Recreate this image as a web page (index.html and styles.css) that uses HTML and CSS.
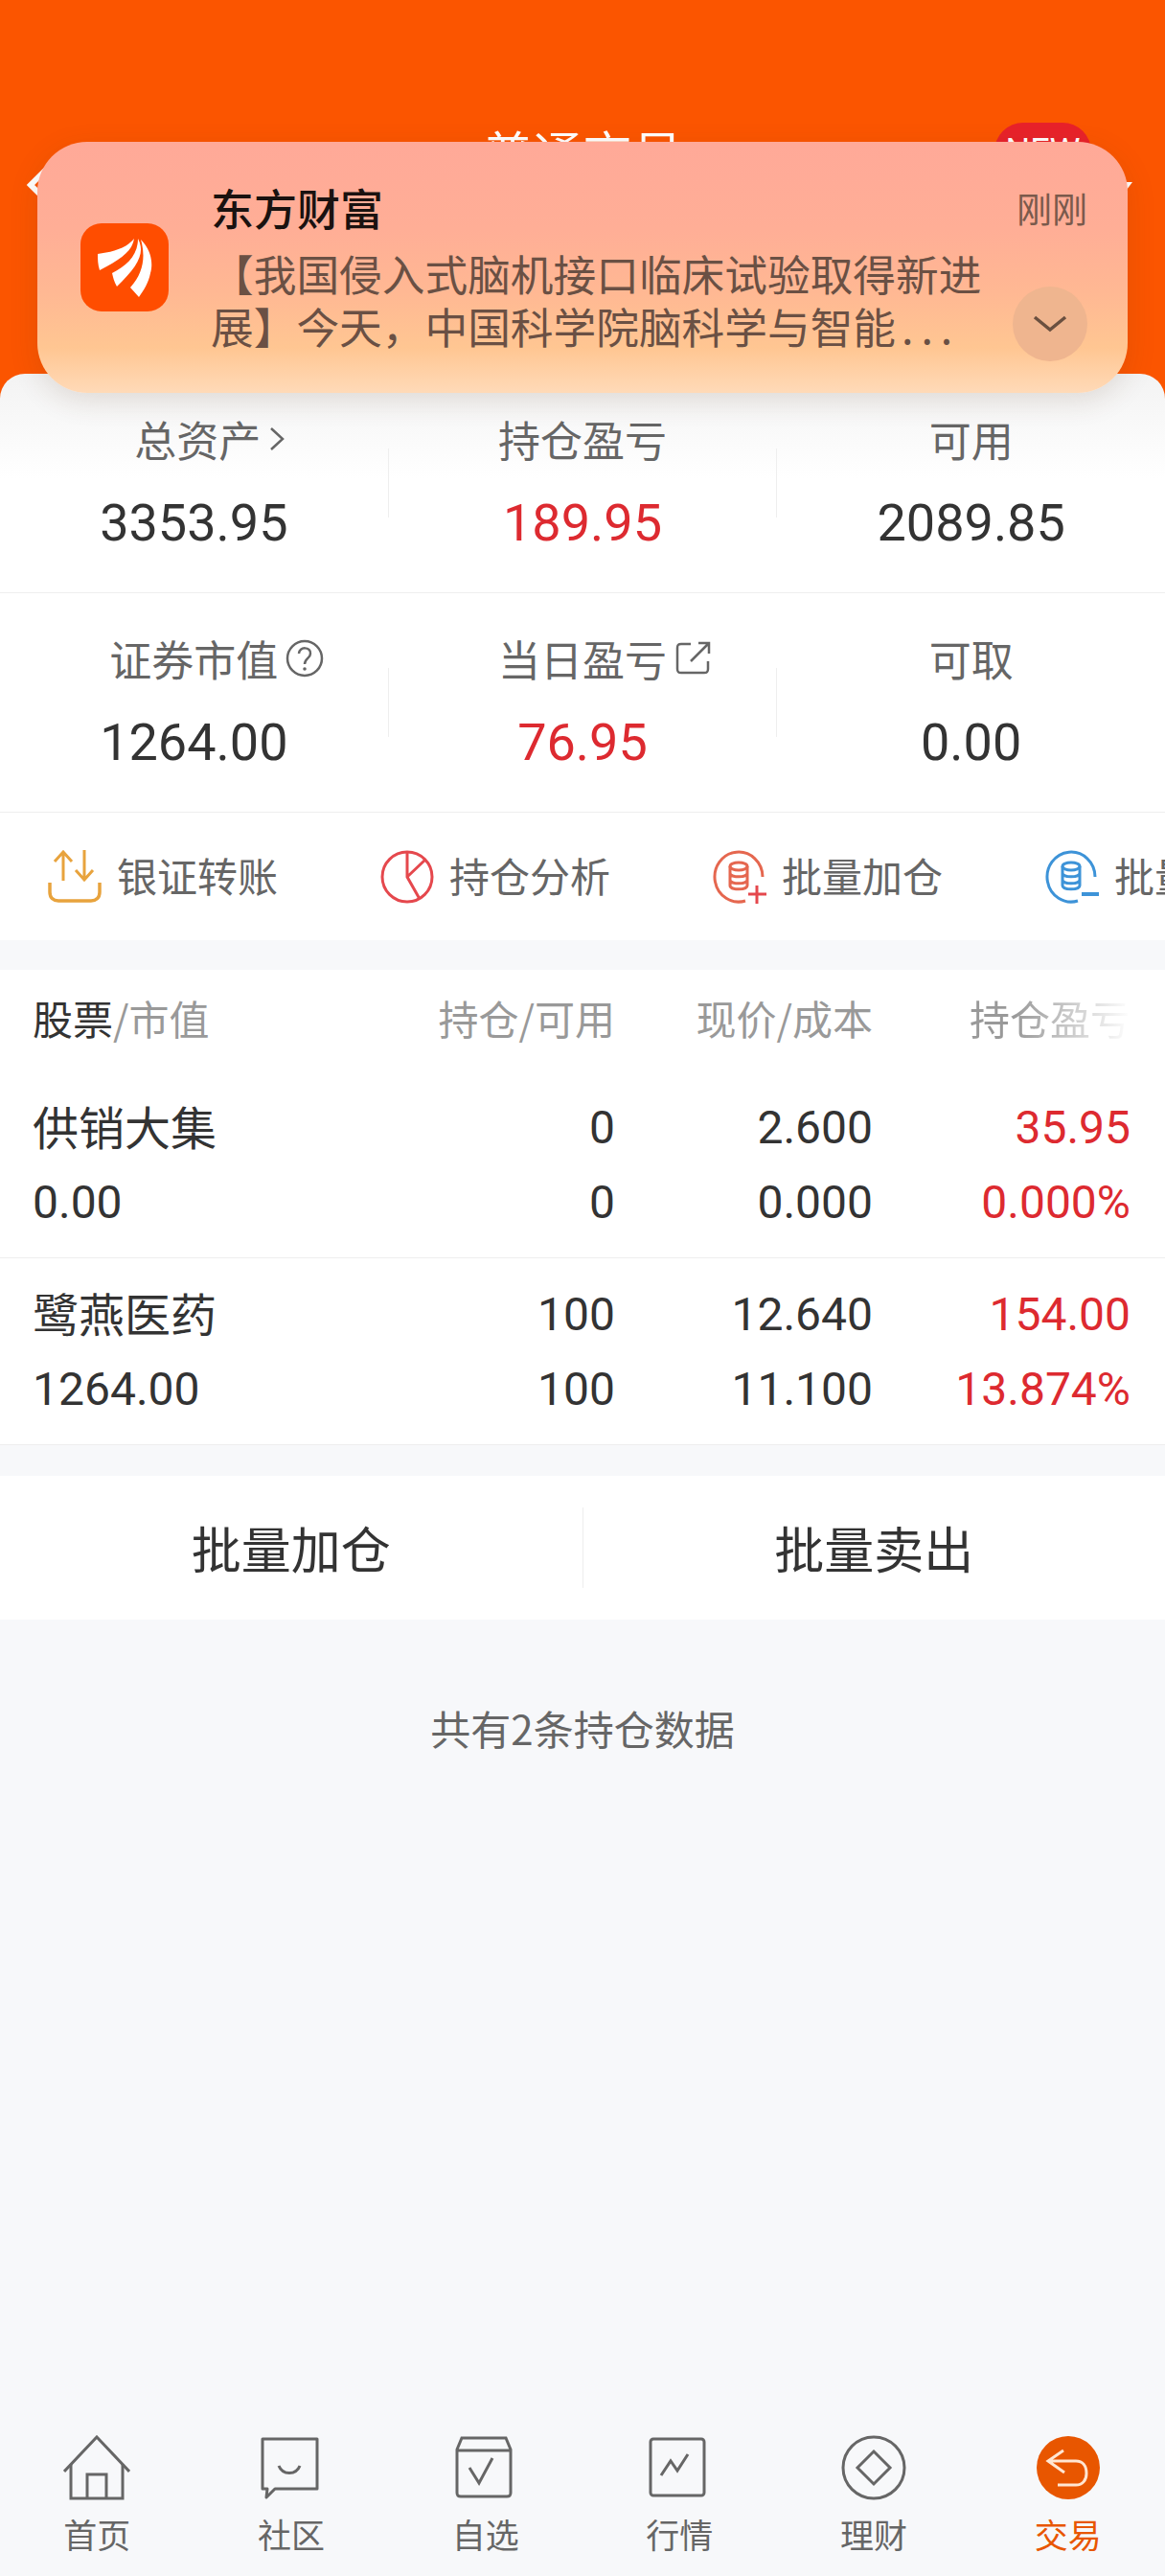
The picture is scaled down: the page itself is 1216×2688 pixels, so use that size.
FILE: index.html
```html
<!DOCTYPE html>
<html lang="zh-CN">
<head>
    <meta charset="UTF-8">
    <title>普通交易</title>
    <link rel="stylesheet" href="styles.css">
</head>
<body>
<div class="page">
    <div class="top">
        <svg class="back" width="30" height="40" viewBox="0 0 30 40"><path d="M24 4 L8 20 L24 36" fill="none" stroke="#fff" stroke-width="6"/></svg>
        <span class="top-title">普通交易</span>
        <span class="new">NEW</span>
        <span class="drop"></span>
    </div>

    <div class="notice">
        <svg class="logo" width="92" height="92" viewBox="0 0 92 92">
            <rect width="92" height="92" rx="22" fill="#ff4d00"/>
            <path d="M18 32C32 30 47 27 56 16C54 29 43 37 20 49C18 43 18 37 18 32Z" fill="#fff"/>
            <path d="M33 52C48 44 60 34 60 16C68 31 60 45 38 66C35 61 34 56 33 52Z" fill="#fff"/>
            <path d="M63 17C74 28 76 42 73 52C71 62 66 70 61 77L52 67C66 52 68 34 63 17Z" fill="#fff"/>
        </svg>
        <div class="notice-main">
            <div class="notice-title">东方财富</div>
            <div class="notice-text">【我国侵入式脑机接口临床试验取得新进展】今天，中国科学院脑科学与智能<span class="dots">...</span></div>
        </div>
        <div class="notice-side">
            <span class="notice-time">刚刚</span>
            <span class="notice-more">
                <svg width="36" height="20" viewBox="0 0 36 20"><path d="M2 3 L18 16 L34 3" fill="none" stroke="#6a5040" stroke-width="3.5"/></svg>
            </span>
        </div>
    </div>

    <div class="assets">
        <div class="stats">
            <div class="stat">
                <div class="stat-label">总资产<svg class="gt" width="18" height="28" viewBox="0 0 18 28"><path d="M3 3 L15 14 L3 25" fill="none" stroke="#666" stroke-width="2.5"/></svg></div>
                <div class="stat-num">3353.95</div>
            </div>
            <i class="stat-sep"></i>
            <div class="stat">
                <div class="stat-label">持仓盈亏</div>
                <div class="stat-num red">189.95</div>
            </div>
            <i class="stat-sep"></i>
            <div class="stat">
                <div class="stat-label">可用</div>
                <div class="stat-num">2089.85</div>
            </div>
        </div>
        <div class="stats">
            <div class="stat">
                <div class="stat-label">证券市值<svg class="ask" width="40" height="40" viewBox="0 0 40 40"><circle cx="20" cy="20" r="18" fill="none" stroke="#666" stroke-width="2.5"/><path d="M14 15C14 7 27 8 26 15C26 20 20 20 20 26" fill="none" stroke="#666" stroke-width="2.5"/><circle cx="20" cy="31" r="1.8" fill="#666"/></svg></div>
                <div class="stat-num">1264.00</div>
            </div>
            <i class="stat-sep"></i>
            <div class="stat">
                <div class="stat-label">当日盈亏<svg class="ask" width="40" height="38" viewBox="0 0 38 38"><path d="M16 4H6C3 4 2 5 2 8V30C2 33 3 34 6 34H30C33 34 34 33 34 30V22" fill="none" stroke="#666" stroke-width="2.5"/><path d="M16 22L34 4M24 3H35V14" fill="none" stroke="#666" stroke-width="2.5"/></svg></div>
                <div class="stat-num red">76.95</div>
            </div>
            <i class="stat-sep"></i>
            <div class="stat">
                <div class="stat-label">可取</div>
                <div class="stat-num">0.00</div>
            </div>
        </div>
    </div>

    <div class="tools">
        <div class="tool">
            <svg width="56" height="56" viewBox="0 0 56 56" fill="none" stroke="#e8a33d" stroke-width="3"><path d="M16 32V2M7 12L16 2L25 12M38 0V30M29 21L38 31L47 21"/><path d="M2 34V44C2 50 6 53 11 53H45C50 53 54 50 54 44V34" stroke-width="3.5"/></svg>
            <span>银证转账</span>
        </div>
        <div class="tool">
            <svg width="56" height="56" viewBox="0 0 56 56" fill="none" stroke="#e5484d" stroke-width="3"><circle cx="28" cy="28" r="26"/><path d="M28 2V28L41 51M28 28L47 10"/></svg>
            <span>持仓分析</span>
        </div>
        <div class="tool">
            <svg width="56" height="56" viewBox="0 0 56 56" fill="none" stroke="#e5674f" stroke-width="3"><path d="M52 28A25 26 0 1 0 34 53"/><ellipse cx="27" cy="17" rx="9" ry="4"/><path d="M18 17V37C18 42 36 42 36 37V17M18 24C18 29 36 29 36 24M18 31C18 36 36 36 36 31"/><path d="M46 37V56M37 46H56" stroke="#e5484d"/></svg>
            <span>批量加仓</span>
        </div>
        <div class="tool">
            <svg width="56" height="56" viewBox="0 0 56 56" fill="none" stroke="#3d93d8" stroke-width="3"><path d="M52 28A25 26 0 1 0 34 53"/><ellipse cx="27" cy="17" rx="9" ry="4"/><path d="M18 17V37C18 42 36 42 36 37V17M18 24C18 29 36 29 36 24M18 31C18 36 36 36 36 31"/><path d="M38 46H56" stroke-width="4"/></svg>
            <span>批量减仓</span>
        </div>
    </div>

    <div class="table">
        <div class="row head">
            <div><b>股票</b>/市值</div>
            <div class="cell">持仓/可用</div>
            <div class="cell">现价/成本</div>
            <div class="cell head-fade">持仓盈亏</div>
        </div>
        <div class="row">
            <div><div class="name">供销大集</div><div class="num">0.00</div></div>
            <div class="cell"><div class="num">0</div><div class="num">0</div></div>
            <div class="cell"><div class="num">2.600</div><div class="num">0.000</div></div>
            <div class="cell red"><div class="num">35.95</div><div class="num">0.000%</div></div>
        </div>
        <div class="row">
            <div><div class="name">鹭燕医药</div><div class="num">1264.00</div></div>
            <div class="cell"><div class="num">100</div><div class="num">100</div></div>
            <div class="cell"><div class="num">12.640</div><div class="num">11.100</div></div>
            <div class="cell red"><div class="num">154.00</div><div class="num">13.874%</div></div>
        </div>
    </div>

    <div class="batch">
        <div class="batch-btn">批量加仓</div>
        <i class="batch-sep"></i>
        <div class="batch-btn">批量卖出</div>
    </div>

    <div class="total">共有2条持仓数据</div>

    <div class="tabs">
        <div class="tab">
            <svg width="70" height="68" viewBox="0 0 70 68" fill="none" stroke="#666" stroke-width="3"><path d="M1 38L35 2L69 38"/><path d="M8 30V66H62V30M25 66V41H45V66"/></svg>
            <span>首页</span>
        </div>
        <div class="tab">
            <svg width="70" height="68" viewBox="0 0 70 68" fill="none" stroke="#666" stroke-width="3"><path d="M5 4H62V56H18L9 65L10 56H5Z" stroke-linejoin="round"/><path d="M22 32C26 42 40 42 44 32"/></svg>
            <span>社区</span>
        </div>
        <div class="tab">
            <svg width="70" height="68" viewBox="0 0 70 68" fill="none" stroke="#666" stroke-width="3"><path d="M5 15L10 3H56L61 15V60C61 63 60 64 57 64H9C6 64 5 63 5 60ZM5 16H61"/><path d="M18 34L28 50L42 24"/></svg>
            <span>自选</span>
        </div>
        <div class="tab">
            <svg width="70" height="68" viewBox="0 0 70 68" fill="none" stroke="#666" stroke-width="3"><rect x="5" y="4" width="56" height="59" rx="3"/><path d="M16 42L26 27L33 37L44 20"/></svg>
            <span>行情</span>
        </div>
        <div class="tab">
            <svg width="70" height="68" viewBox="0 0 70 68" fill="none" stroke="#666" stroke-width="3"><circle cx="35" cy="34" r="32"/><path d="M35 17L52 34L35 51L18 34Z"/></svg>
            <span>理财</span>
        </div>
        <div class="tab active">
            <svg width="70" height="68" viewBox="0 0 70 68" fill="none"><circle cx="35" cy="34" r="33" fill="#e85600"/><path d="M30 16L14 27L31 39M14 27H43C50 27 54 32 54 40C54 47 50 52 43 52H24" stroke="#ffe6d2" stroke-width="3"/></svg>
            <span>交易</span>
        </div>
    </div>
</div>
</body>
</html>
```

FILE: styles.css
```css
*{box-sizing:border-box;}
html,body{margin:0;padding:0;}
body{font-family:"Noto Sans CJK SC","Noto Sans",sans-serif;color:#333;background:#f7f8fa;}
.page{position:relative;width:1216px;min-height:2688px;display:flex;flex-direction:column;overflow:hidden;}
.num{font-family:Roboto,"Noto Sans CJK SC",sans-serif;}
.red{color:#dd2a30;}

.top{
    height:420px;
    background:#fb5500;
    display:flex;
    align-items:flex-start;
    justify-content:center;
    padding-top:124px;
    position:relative;
    color:#fff;
}
.top-title{font-size:52px;line-height:70px;}
.back{position:absolute;left:24px;top:173px;}
.new{
    position:absolute;
    left:1038px;
    top:128px;
    width:101px;
    height:60px;
    border-radius:30px;
    background:#e8222a;
    font:36px/60px Roboto,sans-serif;
    text-align:center;
}
.drop{
    position:absolute;
    left:1158px;
    top:190px;
    border-left:12px solid transparent;
    border-right:12px solid transparent;
    border-top:16px solid #fff;
}

.notice{
    position:absolute;
    left:39px;
    top:148px;
    width:1138px;
    height:262px;
    z-index:5;
    border-radius:52px;
    background:linear-gradient(180deg,#ffa998 0%,#ffae96 35%,#ffb893 60%,#ffc692 82%,#ffdab8 100%);
    box-shadow:0 8px 30px rgba(90,60,30,.14);
    display:flex;
    padding:0 42px 0 45px;
}
.logo{flex:none;margin-top:85px;}
.notice-main{width:815px;margin-left:44px;padding-top:43px;}
.notice-title{font-size:45px;line-height:52px;font-weight:500;color:#1a1210;}
.notice-text{
    margin-top:14px;
    font-size:44.7px;
    line-height:55px;
    color:#6a5044;
}
.dots{letter-spacing:8px;margin-left:6px;}
.notice-side{flex:1;display:flex;flex-direction:column;align-items:flex-end;padding-top:45px;}
.notice-time{font-size:37px;line-height:48px;color:#7a5a4c;white-space:nowrap;}
.notice-more{
    flex:none;
    width:78px;
    height:78px;
    margin-top:58px;
    border-radius:50%;
    background:#efb58f;
    display:flex;
    align-items:center;
    justify-content:center;
}

.assets{
    margin-top:-30px;
    position:relative;
    background:linear-gradient(180deg,#f3f3f3 0,#fff 110px);
    border-radius:26px 26px 0 0;
}
.stats{
    height:229px;
    display:grid;
    grid-template-columns:1fr 1px 1fr 1px 1fr;
    border-bottom:1px solid #eee;
}
.stat{text-align:center;padding-top:38px;}
.stat-sep{height:72px;margin-top:78px;background:#eee;}
.stat-label{
    height:60px;
    font-size:44px;
    line-height:60px;
    color:#666;
    display:flex;
    align-items:center;
    justify-content:center;
}
.gt{margin:0 -34px 0 8px;}
.ask{margin:0 -48px 0 8px;}
.stat-num{
    margin-top:26px;
    font:54px/64px Roboto,sans-serif;
    color:#333;
}
.stat-num.red{color:#dd2a30;}

.tools{
    height:133px;
    background:#fff;
    display:flex;
    align-items:center;
    gap:107px;
    padding:0 0 4px 50px;
    white-space:nowrap;
    overflow:hidden;
}
.tool{flex:none;display:flex;align-items:center;gap:16px;font-size:42px;color:#666;}
.tool span{width:168px;}
.tool svg{margin-top:4px;}

.table{margin-top:31px;background:#fff;border-bottom:1px solid #eee;}
.row{
    display:grid;
    grid-template-columns:339px 269px 269px 269px;
    padding:20px 36px 18px 34px;
    font-size:48px;
    line-height:78px;
    color:#333;
    border-bottom:1px solid #eee;
}
.row:last-child{border-bottom:0;}
.name{height:78px;line-height:73px;}
.cell{text-align:right;}
.row.head{
    height:106px;
    padding-top:0;
    padding-bottom:0;
    font-size:42px;
    line-height:100px;
    color:#999;
    border-bottom:0;
}
.row.head b{font-weight:400;color:#333;}
.head-fade{
    color:transparent;
    background:linear-gradient(90deg,#999 55%,#fff 100%);
    -webkit-background-clip:text;
    background-clip:text;
}

.batch{
    margin-top:32px;
    height:150px;
    background:#fff;
    display:flex;
    align-items:center;
}
.batch-btn{flex:1;text-align:center;font-size:52px;line-height:72px;color:#333;}
.batch-sep{width:1px;height:84px;background:#eee;}

.total{margin-top:83px;text-align:center;font-size:42px;line-height:60px;color:#666;}

.tabs{margin-top:auto;height:152px;display:flex;padding-top:5px;}
.tab{flex:1;display:flex;flex-direction:column;align-items:center;font-size:35px;line-height:48px;color:#666;}
.tab span{margin-top:11px;}
.tab.active{color:#e85600;}
```
